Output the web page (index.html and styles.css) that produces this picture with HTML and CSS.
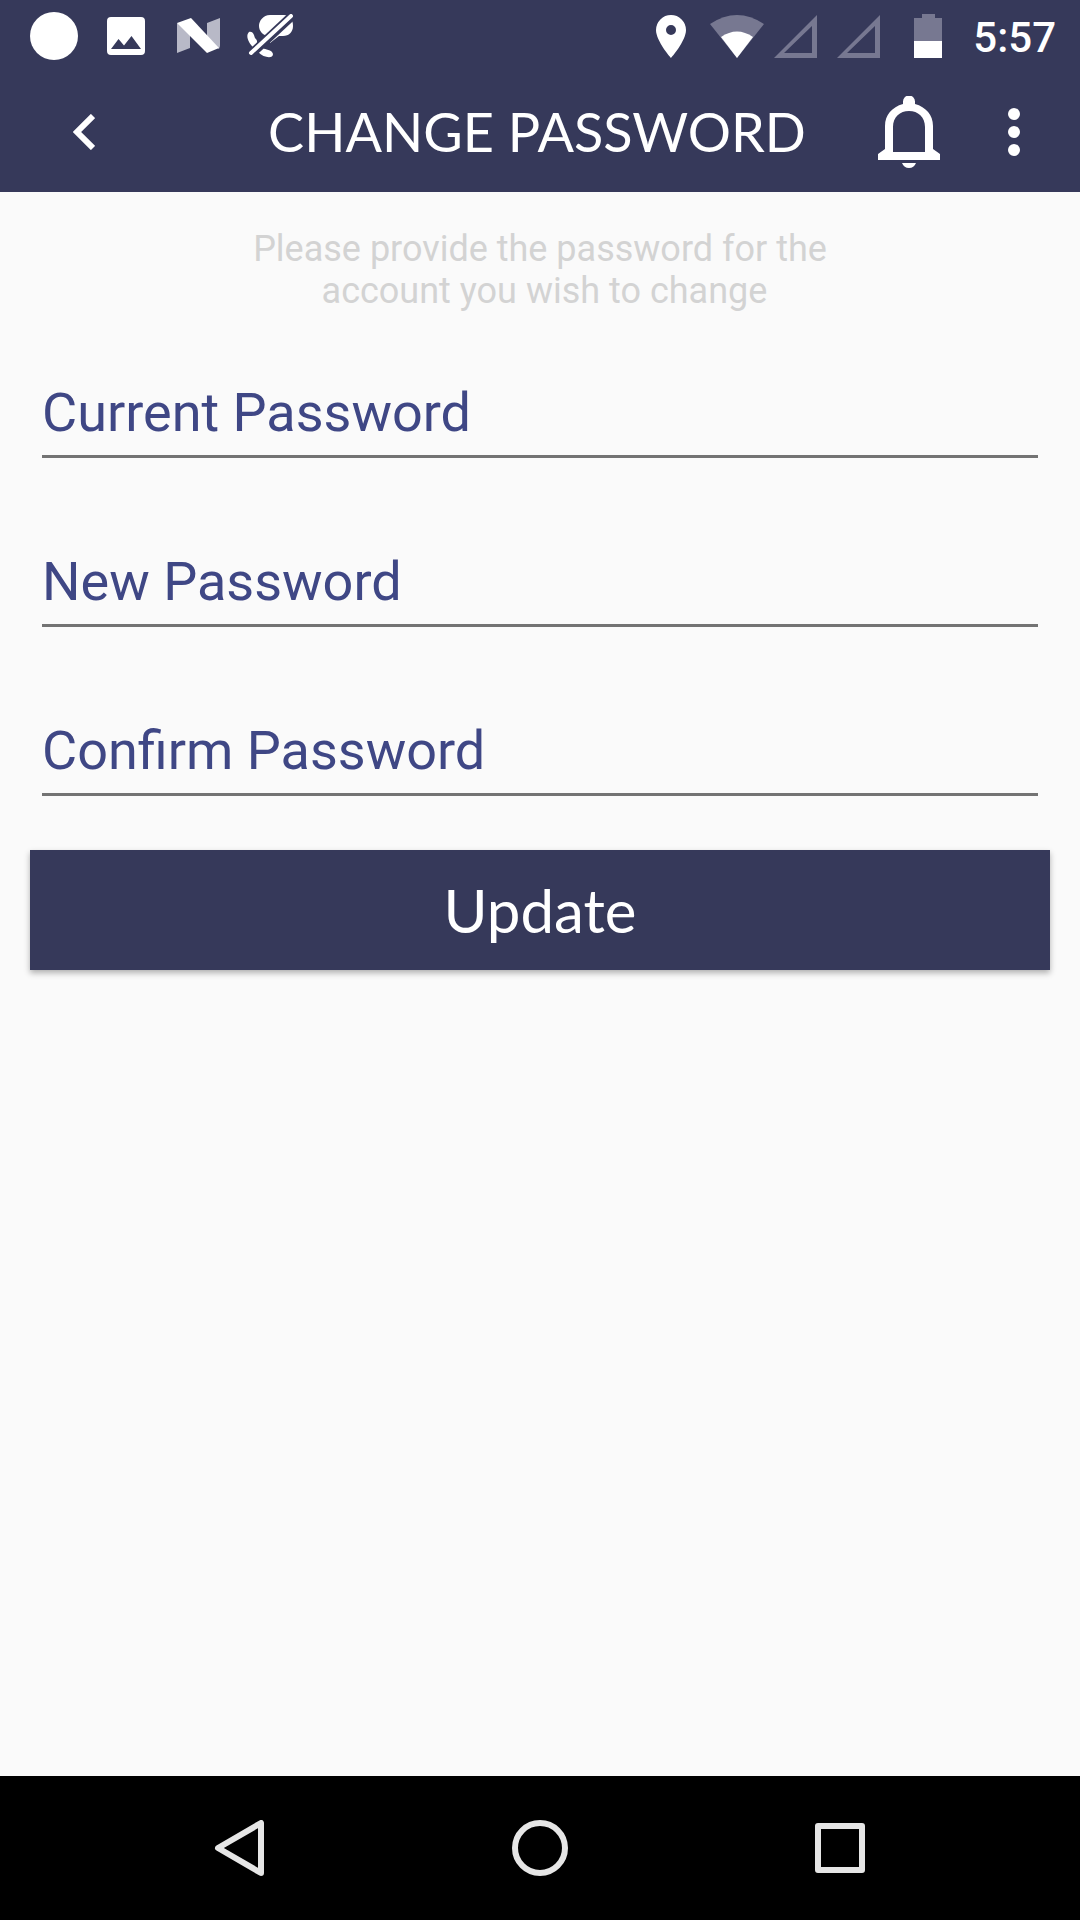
FILE: index.html
```html
<!DOCTYPE html>
<html lang="en">
<head>
<meta charset="utf-8">
<meta name="viewport" content="width=device-width, initial-scale=1">
<title>Change Password</title>
<link rel="stylesheet" href="styles.css">
</head>
<body>
<div class="status-bar">
  <div class="status-group status-notifications">
    <svg width="48" height="48" viewBox="0 0 48 48"><circle cx="24" cy="24" r="24" fill="#fff"/></svg>
    <svg width="38" height="38" viewBox="0 0 38 38"><path fill="#fff" fill-rule="evenodd" d="M4 0h30a4 4 0 0 1 4 4v30a4 4 0 0 1-4 4H4a4 4 0 0 1-4-4V4a4 4 0 0 1 4-4zM4 32h30L24.500 19l-7.500 9.500-5.500-6.500z"/></svg>
    <svg width="49" height="36" viewBox="-3 0 49 36"><path fill="#b8b9c7" d="M0 5v30l13-5V12zM43 0 30 5v16l12 10 1-3z"/><path fill="#fff" d="M0 5 14 0l28 30-12 5z"/></svg>
    <svg class="muted-chat" width="48" height="44" viewBox="0 0 48 44"><path fill="#fff" d="M24 1H38C44 1 47 6 47 12S43 22 37 22H33L24 29V22C17 22 13 17 13 12S17 1 24 1z"/><path fill="#fff" d="M3 18c4-1 5 3 6 6 2 2 3 4 1 6l-3 3C3 29-1 22 3 18zM12 38l5-4c2 2 9 1 10 6 0 5-9 4-15-2z"/><path stroke="#36395a" stroke-width="9" d="M2 43 48 0"/><path stroke="#fff" stroke-width="4" stroke-linecap="round" d="M5 39 45 2"/></svg>
  </div>
  <div class="status-group status-system">
    <svg class="pin" width="30" height="43" viewBox="0 0 30 43"><path fill="#fff" fill-rule="evenodd" d="M15 0A15 15 0 0 1 30 15C30 26 15 43 15 43S0 26 0 15A15 15 0 0 1 15 0zm0 10a5 5 0 1 0 0 10 5 5 0 0 0 0-10z"/></svg>
    <svg class="wifi" width="54" height="43" viewBox="0 0 54 43"><path fill="#777891" d="M27 43 0 9Q27-9 54 9z"/><path fill="#fff" d="M27 43 11 22q16-11 32 0z"/></svg>
    <svg class="signal" width="43" height="43" viewBox="0 0 43 43"><path fill="#777891" fill-rule="evenodd" d="M43 0v43H0zM38 11 10 38h28z"/></svg>
    <svg class="signal-last" width="43" height="43" viewBox="0 0 43 43"><path fill="#777891" fill-rule="evenodd" d="M43 0v43H0zM38 11 10 38h28z"/></svg>
    <svg class="battery" width="28" height="44" viewBox="0 0 28 44"><path fill="#777891" d="M0 4h8V0h13v4h7v23H0z"/><path fill="#fff" d="M0 27h28v17H0z"/></svg>
    <time class="clock">5:57</time>
  </div>
</div>
<header class="app-bar">
  <button class="icon-button" type="button" aria-label="Back">
    <svg width="22" height="36" viewBox="0 0 22 36"><path fill="none" stroke="#fff" stroke-width="6" d="M20 2 4 18l16 16"/></svg>
  </button>
  <h1 class="app-title">CHANGE PASSWORD</h1>
  <div class="app-actions">
    <button class="icon-button" type="button" aria-label="Notifications">
      <svg width="62" height="72" viewBox="0 0 62 72"><path fill="#fff" fill-rule="evenodd" d="M25 8V5.500a6 6 0 0 1 12 0V8C48 11 55 19 55 30v23l7 5v6H0v-6l7-5V30C7 19 14 11 25 8zM15 56h32V31C47 21 40 15 31 15S15 21 15 31z"/><path fill="#fff" d="M24 67h14q-2 5-7 5t-7-5z"/></svg>
    </button>
    <button class="icon-button" type="button" aria-label="More options">
      <svg width="12" height="48" viewBox="0 0 12 48"><g fill="#fff"><circle cx="6" cy="6" r="6"/><circle cx="6" cy="24" r="6"/><circle cx="6" cy="42" r="6"/></g></svg>
    </button>
  </div>
</header>
<main class="content">
  <p class="hint">Please provide the password for the<br>&nbsp;account you wish to change</p>
  <form class="form">
    <div class="field">
      <label class="field-label" for="current">Current Password</label>
      <input class="field-input" id="current" type="password">
    </div>
    <div class="field">
      <label class="field-label" for="new">New Password</label>
      <input class="field-input" id="new" type="password">
    </div>
    <div class="field">
      <label class="field-label" for="confirm">Confirm Password</label>
      <input class="field-input" id="confirm" type="password">
    </div>
    <button class="submit" type="submit">Update</button>
  </form>
</main>
<nav class="nav-bar" aria-label="System">
  <button class="nav-button" type="button" aria-label="Back"><svg width="56" height="56" viewBox="0 0 56 56"><path d="M49 3v50L6 28z"/></svg></button>
  <button class="nav-button" type="button" aria-label="Home"><svg width="56" height="56" viewBox="0 0 56 56"><circle cx="28" cy="28" r="25"/></svg></button>
  <button class="nav-button" type="button" aria-label="Recent apps"><svg width="56" height="56" viewBox="0 0 56 56"><path d="M6 6h44v44H6z"/></svg></button>
</nav>
</body>
</html>
```
FILE: styles.css
```css
* { box-sizing: border-box; }

body {
  margin: 0;
  min-height: 100vh;
  display: flex;
  flex-direction: column;
  background: #fafafa;
  font-family: Roboto, "Liberation Sans", sans-serif;
}

svg { display: block; }

button {
  border: 0;
  background: none;
  cursor: pointer;
}

.status-bar {
  display: flex;
  justify-content: space-between;
  align-items: center;
  height: 72px;
  padding: 0 24px 0 30px;
  background: #36395a;
  color: #fff;
}

.status-group { display: flex; align-items: center; }
.status-notifications { gap: 29px; }
.muted-chat { margin-left: -6px; }
.pin { margin-right: 24px; }
.wifi { margin-right: 10px; }
.signal { margin-right: 20px; }
.signal-last { margin-right: 34px; }
.battery { margin-right: 31px; }

.clock {
  padding-top: 4px;
  font-size: 42px;
  line-height: 48px;
  font-weight: 500;
}

.app-bar {
  display: grid;
  grid-template-columns: 1fr auto 1fr;
  align-items: center;
  height: 120px;
  padding: 0 24px 0 18px;
  background: #36395a;
  color: #fff;
}

.icon-button {
  display: flex;
  align-items: center;
  justify-content: center;
  width: 84px;
  height: 96px;
  padding: 0;
}

.app-bar > .icon-button { margin-left: 24px; }

.app-title {
  margin: 0;
  font-family: Lato, "Liberation Sans", sans-serif;
  font-size: 54px;
  line-height: 64px;
  font-weight: 400;
}

.app-actions {
  display: flex;
  justify-content: flex-end;
  gap: 21px;
}

.content {
  flex: 1;
  padding: 36px 30px;
}

.hint {
  margin: 0 0 64px;
  color: #d3d3d3;
  font-size: 36px;
  line-height: 42px;
  text-align: center;
}

.form { display: flex; flex-direction: column; }

/* The label rests on top of its empty input, as a placeholder does. */
.field {
  display: grid;
  margin: 0 12px 87px;
}

.field:last-of-type { margin-bottom: 54px; }

.field-label,
.field-input {
  grid-area: 1 / 1;
  font-size: 54px;
  line-height: 64px;
  color: #3f4785;
}

.field-label {
  padding: 5px 0 10px;
  pointer-events: none;
}

.field-input {
  width: 100%;
  height: 82px;
  padding: 0;
  border: 0;
  border-bottom: 3px solid #737373;
  border-radius: 0;
  outline: 0;
  background: none;
  font-family: inherit;
}

.submit {
  height: 120px;
  padding: 0;
  background: #36395a;
  box-shadow: 0 3px 6px rgba(0, 0, 0, 0.3);
  color: #fff;
  font-family: Lato, "Liberation Sans", sans-serif;
  font-size: 60px;
  line-height: 72px;
}

.nav-bar {
  display: flex;
  justify-content: center;
  align-items: center;
  gap: 160px;
  height: 144px;
  background: #000;
}

.nav-button {
  display: flex;
  justify-content: center;
  width: 140px;
  padding: 0;
}

.nav-button svg {
  fill: none;
  stroke: #e6e6e6;
  stroke-width: 6px;
  stroke-linejoin: round;
}
```
